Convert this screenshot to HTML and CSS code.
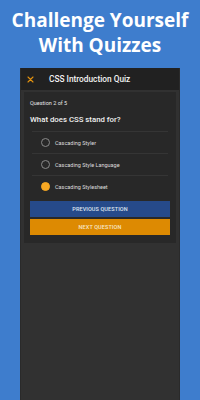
FILE: index.html
```html
<!DOCTYPE html>
<html>
<head>
<meta charset="utf-8">
<link rel="stylesheet" href="styles.css">
</head>
<body>
<h1 class="headline">Challenge Yourself<br>With Quizzes</h1>
<div class="phone">
  <div class="appbar">
    <svg class="close" width="7" height="7" viewBox="0 0 7 7"><path d="M1 1L6 6M6 1L1 6" stroke="#e3920f" stroke-width="1.1" stroke-linecap="round"/></svg>
    <span class="title">CSS Introduction Quiz</span>
  </div>
  <div class="card">
    <div class="qnum">Question 2 of 5</div>
    <div class="question">What does CSS stand for?</div>
    <div class="options">
      <div class="option"><span class="radio"></span><span>Cascading Styler</span></div>
      <div class="option"><span class="radio"></span><span>Cascading Style Language</span></div>
      <div class="option"><span class="radio checked"></span><span>Cascading Stylesheet</span></div>
    </div>
    <div class="btn prev">PREVIOUS QUESTION</div>
    <div class="btn next">NEXT QUESTION</div>
  </div>
</div>
</body>
</html>
```
FILE: styles.css
```css
html, body {
  margin: 0;
  padding: 0;
  height: 400px;
  overflow: hidden;
  background: #3e7dcd;
}
body {
  display: flex;
  flex-direction: column;
  align-items: center;
}
.headline {
  margin: 0;
  padding-top: 8px;
  height: 68px;
  flex: none;
  box-sizing: border-box;
  font-family: "Open Sans", sans-serif;
  font-weight: 700;
  font-size: 19px;
  line-height: 25px;
  color: #ffffff;
  text-align: center;
}
.phone {
  width: 158px;
  flex: 1;
  background: #313131;
  box-shadow: -1px 0 0 #2a2a2a, 1px 0 0 #2a2a2a;
  font-family: Roboto, sans-serif;
}
.appbar {
  height: 22px;
  background: #212121;
  display: flex;
  align-items: center;
  padding-left: 6px;
}
.close {
  display: block;
}
.title {
  margin-left: 15px;
  color: #f2f2f2;
  font-size: 8.3px;
  font-weight: 500;
}
.card {
  margin: 2px 3px 0 3px;
  background: #282828;
  padding: 6px 6px 8px 6px;
}
.qnum {
  color: #e6e6e6;
  font-size: 5.5px;
  line-height: 10px;
}
.question {
  margin-top: 7px;
  color: #f0f0f0;
  font-size: 7.8px;
  font-weight: 500;
  line-height: 10px;
}
.options {
  margin-top: 6px;
  padding: 0 2px;
}
.option {
  height: 21px;
  border-top: 1px solid #353535;
  display: flex;
  align-items: center;
  padding-left: 9px;
  color: #dedede;
  font-size: 5.5px;
}
.radio {
  width: 7px;
  height: 7px;
  border: 1px solid #8a8a8a;
  border-radius: 50%;
  margin-right: 5px;
  box-sizing: content-box;
}
.radio.checked {
  border-color: #f7a823;
  background: #f7a823;
}
.btn {
  height: 16px;
  display: flex;
  align-items: center;
  justify-content: center;
  color: #dfe4ee;
  font-size: 5.5px;
  font-weight: 500;
  letter-spacing: 0.1px;
}
.prev {
  margin-top: 4px;
  background: #264a8a;
}
.next {
  margin-top: 2px;
  background: #dd8a02;
  color: #f7e6c8;
}
```
